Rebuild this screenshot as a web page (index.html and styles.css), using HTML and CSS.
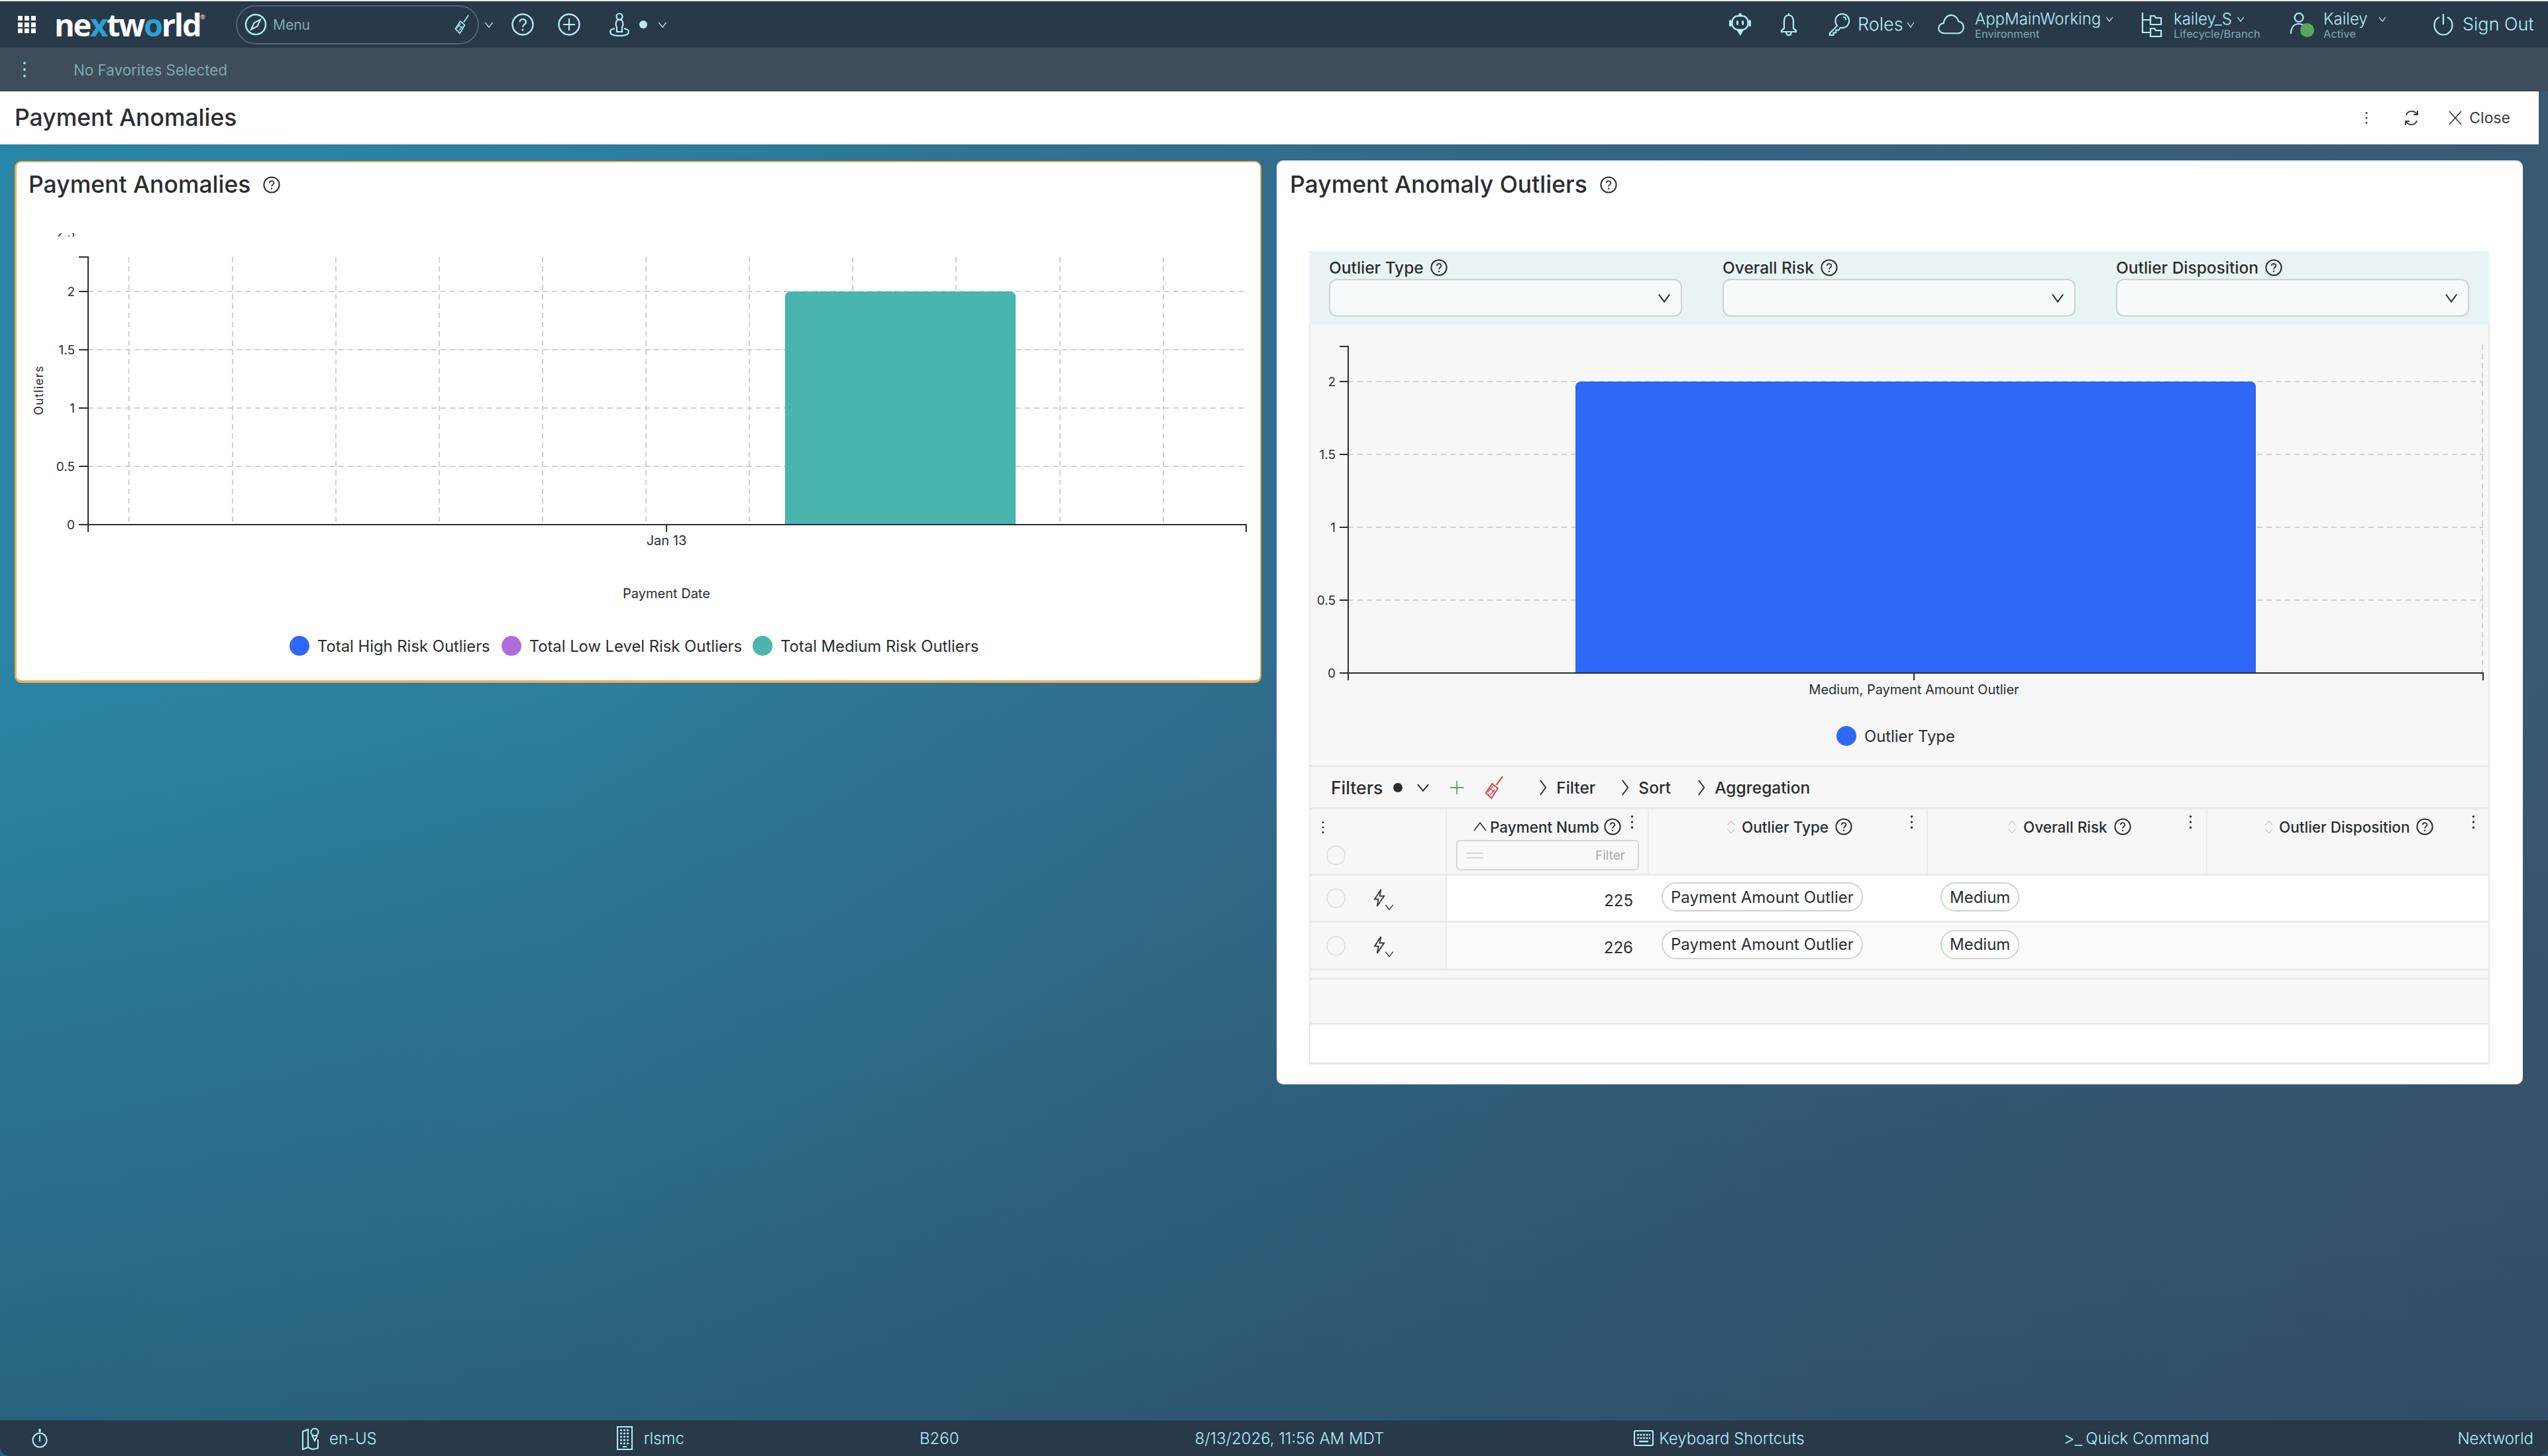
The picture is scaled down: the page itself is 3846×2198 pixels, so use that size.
FILE: index.html
```html
<!DOCTYPE html>
<html lang="en">
<head>
<meta charset="utf-8">
<title>Payment Anomalies</title>
<link rel="stylesheet" href="styles.css">
</head>
<body>
<svg class="defs" width="0" height="0">
  <defs>
    <symbol id="help" viewBox="0 0 26 26"><circle cx="13" cy="13" r="11.6" fill="none" stroke="currentColor" stroke-width="2"/><path d="M9.8 10.3c0-4.2 6.6-4.2 6.6-.2 0 2.6-3.3 2.6-3.3 5.4" fill="none" stroke="currentColor" stroke-width="1.8"/><circle cx="13" cy="18.8" r="1.2" fill="currentColor"/></symbol>
    <symbol id="kebab" viewBox="0 0 8 32"><circle cx="4" cy="4" r="2.4" fill="currentColor"/><circle cx="4" cy="16" r="2.4" fill="currentColor"/><circle cx="4" cy="28" r="2.4" fill="currentColor"/></symbol>
    <symbol id="chev" viewBox="0 0 16 10" preserveAspectRatio="none"><path d="M1.5 1 8 9l6.500-8" fill="none" stroke="currentColor" stroke-width="1.600"/></symbol>
    <symbol id="chevr" viewBox="0 0 10 22" preserveAspectRatio="none"><path d="M1.500 1.500 8.500 11l-7 9.500" fill="none" stroke="currentColor" stroke-width="1.600"/></symbol>
    <symbol id="sort" viewBox="0 0 14 22" preserveAspectRatio="none"><path d="M1.500 8 7 1.500 12.500 8M1.500 14 7 20.500 12.500 14" fill="none" stroke="#c9c9c9" stroke-width="1.300"/></symbol>
    <symbol id="broom" viewBox="0 0 30 36" preserveAspectRatio="none"><path d="M29 1 19 14M12 12l9 7-10 15-9-8z" fill="none" stroke="currentColor" stroke-width="2.200"/><path d="M7 18l9 7M5 25l8-9M9 29l7-8" fill="none" stroke="currentColor" stroke-width="1.500"/></symbol>
    <symbol id="bolt" viewBox="0 0 20 28" preserveAspectRatio="none"><path d="M12 1 2 16h6l-2 11 11-16h-7l2-10z" fill="none" stroke="currentColor" stroke-width="1.800"/></symbol>
  </defs>
</svg>

<div class="strip"></div>

<header class="topbar">
  <svg class="i-grid" viewBox="0 0 27 26"><g fill="#fff"><rect width="7" height="7"/><rect x="10" width="7" height="7"/><rect x="20" width="7" height="7"/><rect y="10" width="7" height="7"/><rect x="10" y="10" width="7" height="7"/><rect x="20" y="10" width="7" height="7"/><rect y="19" width="7" height="7"/><rect x="10" y="19" width="7" height="7"/><rect x="20" y="19" width="7" height="7"/></g></svg>
  <div class="logo">ne<span class="logo-x">x</span>tw<span class="logo-o">o</span>rld<sup class="logo-r">®</sup></div>
  <div class="menu">
    <svg class="i-compass" viewBox="0 0 34 34"><circle cx="17" cy="17" r="15" fill="none" stroke="currentColor" stroke-width="2.400"/><path d="M24 9.500 19.500 19.500 10 24.500 14.500 14.500z" fill="none" stroke="currentColor" stroke-width="2"/></svg>
    <span class="menu-text">Menu</span>
    <svg class="i-menu-broom"><use href="#broom"/></svg>
  </div>
  <svg class="i-chev c1"><use href="#chev"/></svg>
  <svg class="i-round c2" viewBox="0 0 34 34"><circle cx="17" cy="17" r="15.500" fill="none" stroke="currentColor" stroke-width="2.400"/><path d="M12.500 13.500c0-6 9.500-6 9.500-.2 0 3.700-5 3.700-5 7.700" fill="none" stroke="currentColor" stroke-width="2.200"/><circle cx="17" cy="25" r="1.600" fill="currentColor"/></svg>
  <svg class="i-round c3" viewBox="0 0 34 34"><circle cx="17" cy="17" r="15.500" fill="none" stroke="currentColor" stroke-width="2.400"/><path d="M17 8v18M8 17h18" stroke="currentColor" stroke-width="2.200"/></svg>
  <svg class="i-round c4" viewBox="0 0 34 36"><path d="M10 24C5 25 3 27 3 29c0 4 6 6 14 6s14-2 14-6c0-2-2-4-7-5" fill="none" stroke="currentColor" stroke-width="2.200"/><circle cx="17" cy="6" r="4.500" fill="none" stroke="currentColor" stroke-width="2.200"/><path d="M14 11c-3 3-3 8-1 11v7h8v-7c2-3 2-8-1-11z" fill="none" stroke="currentColor" stroke-width="2.200"/></svg>
  <span class="tb-dot"></span>
  <svg class="i-chev c5"><use href="#chev"/></svg>

  <svg class="i-robot" viewBox="0 0 33 34"><path d="M16.500 0v4" stroke="currentColor" stroke-width="4"/><rect x="4.500" y="4" width="24" height="21" rx="9" fill="none" stroke="currentColor" stroke-width="2.400"/><rect x="0" y="10" width="3.500" height="10" rx="1.500" fill="currentColor"/><rect x="29.500" y="10" width="3.500" height="10" rx="1.500" fill="currentColor"/><rect x="11" y="11" width="2.800" height="7" rx="1.400" fill="currentColor"/><rect x="19.200" y="11" width="2.800" height="7" rx="1.400" fill="currentColor"/><path d="M11 25h11l-5 9z" fill="currentColor"/></svg>
  <svg class="i-bell" viewBox="0 0 26 34"><path d="M13 0v3M13 3C8 3 6 7 6 13v10l-4 3v2h22v-2l-4-3V13C20 7 18 3 13 3zM9.500 28v2c0 4 7 4 7 0v-2" fill="none" stroke="currentColor" stroke-width="2.200"/></svg>
  <svg class="i-key" viewBox="0 0 34 36"><path d="M14 20 2 32v3h6v-4h4v-4h4l3-4c8 2 14-4 14-11C33 6 28 1 22 1S11 6 11 12c0 3 1 6 3 8z" fill="none" stroke="currentColor" stroke-width="2.200"/><path d="M23 6c3 0 5 2 5 5" fill="none" stroke="currentColor" stroke-width="2"/></svg>
  <span class="tb-text t-roles">Roles</span>
  <svg class="i-chev c6"><use href="#chev"/></svg>
  <svg class="i-cloud" viewBox="0 0 42 34"><path d="M10 31C4 31 1 27 1 23c0-4 3-8 8-8 1-8 6-13 12-13 6 0 10 4 12 10 5 1 8 5 8 10s-4 9-9 9z" fill="none" stroke="currentColor" stroke-width="2.200"/></svg>
  <div class="stack s-env">
    <div class="stack-top"><span class="tb-text">AppMainWorking</span><svg class="i-chev small"><use href="#chev"/></svg></div>
    <span class="tb-sub">Environment</span>
  </div>
  <svg class="i-branch" viewBox="0 0 32 38"><path d="M2 1v30h12M2 12h12M14 6h6l2 3h8v10H14zM14 25h6l2 3h8v9H14z" fill="none" stroke="currentColor" stroke-width="2.200"/></svg>
  <div class="stack s-branch">
    <div class="stack-top"><span class="tb-text">kailey_S</span><svg class="i-chev small"><use href="#chev"/></svg></div>
    <span class="tb-sub">Lifecycle/Branch</span>
  </div>
  <div class="person">
    <svg class="i-person" viewBox="0 0 36 37"><circle cx="13" cy="7.500" r="6.500" fill="none" stroke="currentColor" stroke-width="2.200"/><path d="M1 32c0-9 4-15 12-15 3 0 5 1 7 2" fill="none" stroke="currentColor" stroke-width="2.200"/></svg>
    <span class="status"></span>
  </div>
  <div class="stack s-user">
    <div class="stack-top"><span class="tb-text">Kailey</span><svg class="i-chev small gap"><use href="#chev"/></svg></div>
    <span class="tb-sub">Active</span>
  </div>
  <svg class="i-power" viewBox="0 0 30 34"><path d="M9 6C4 8 1.500 13 1.500 18c0 8 6 14.500 13.500 14.500S28.500 26 28.500 18C28.500 13 26 8 21 6M15 1v16" fill="none" stroke="currentColor" stroke-width="2.200"/></svg>
  <span class="tb-text t-sign">Sign Out</span>
</header>

<div class="favbar">
  <svg class="i-favk"><use href="#kebab"/></svg>
  <span class="fav-text">No Favorites Selected</span>
</div>

<div class="pagehead">
  <h1 class="pagetitle">Payment Anomalies</h1>
  <svg class="i-pagek"><use href="#kebab"/></svg>
  <svg class="i-refresh" viewBox="0 0 24 26"><path d="M4 9C5 5 8 3 12 3c3 0 6 1 8 4M20 17c-1 4-4 6-8 6-3 0-6-1-8-4" fill="none" stroke="currentColor" stroke-width="2"/><path d="M21 2v6h-6M3 24v-6h6" fill="none" stroke="currentColor" stroke-width="2"/></svg>
  <svg class="i-x" viewBox="0 0 22 22"><path d="M2 1l18 20M20 1 2 21" stroke="currentColor" stroke-width="1.800"/></svg>
  <span class="close-text">Close</span>
</div>

<main class="main">
  <section class="card card-left">
    <div class="cardhead"><h2 class="cardtitle">Payment Anomalies</h2><svg class="i-help-lg"><use href="#help"/></svg></div>
    <svg class="chart-left" viewBox="25 340 1876 580" width="1876" height="580">
      <defs><clipPath id="clip25"><rect x="80" y="352" width="40" height="5"/></clipPath></defs>
      <g class="grid">
        <path d="M194.500 388V792M351 388V792M507 388V792M663 388V792M819 388V792M975 388V792M1131 388V792M1287 388V792M1443 388V792M1600 388V792M1756 388V792"/>
        <path d="M133 440H1881M133 528H1881M133 616H1881M133 704H1881"/>
      </g>
      <path class="bar-teal" d="M1185 792V448a8 8 0 0 1 8-8H1525a8 8 0 0 1 8 8V792z"/>
      <path class="axis" d="M119 388H133V803M119 440H133M119 528H133M119 616H133M119 704H133M119 792H1881V803M1006 792V803"/>
      <g class="ticks">
        <text x="113" y="359" clip-path="url(#clip25)">2.5</text>
        <text x="113" y="447">2</text><text x="113" y="535">1.5</text><text x="113" y="623">1</text><text x="113" y="711">0.5</text><text x="113" y="799">0</text>
      </g>
      <text class="ax-label" x="1006" y="823">Jan 13</text>
      <text class="ax-label" x="1006" y="903">Payment Date</text>
      <text class="ax-label wide" transform="translate(65 589) rotate(-90)">Outliers</text>
    </svg>
    <div class="legend legend-left">
      <span class="lg-dot blue"></span><span class="lg-text">Total High Risk Outliers</span>
      <span class="lg-dot purple"></span><span class="lg-text">Total Low Level Risk Outliers</span>
      <span class="lg-dot teal"></span><span class="lg-text">Total Medium Risk Outliers</span>
    </div>
  </section>

  <section class="card card-right">
    <div class="cardhead"><h2 class="cardtitle">Payment Anomaly Outliers</h2><svg class="i-help-lg"><use href="#help"/></svg></div>
    <div class="inner">
      <div class="band">
        <div class="field"><div class="field-label">Outlier Type<svg class="i-help"><use href="#help"/></svg></div><div class="select"><svg class="i-sel"><use href="#chev"/></svg></div></div>
        <div class="field"><div class="field-label">Overall Risk<svg class="i-help"><use href="#help"/></svg></div><div class="select"><svg class="i-sel"><use href="#chev"/></svg></div></div>
        <div class="field"><div class="field-label">Outlier Disposition<svg class="i-help"><use href="#help"/></svg></div><div class="select"><svg class="i-sel"><use href="#chev"/></svg></div></div>
      </div>
      <div class="chartbox">
        <svg class="chart-right" viewBox="1978 490 1778 580" width="1778" height="580">
          <g class="grid">
            <path d="M2035 576H3748M2035 686H3748M2035 796H3748M2035 906H3748M3747 520V1016"/>
          </g>
          <path class="bar-blue" d="M2378 1016V584a8 8 0 0 1 8-8H3397a8 8 0 0 1 8 8V1016z"/>
          <path class="axis" d="M2022 523H2035V1027M2022 576H2035M2022 686H2035M2022 796H2035M2022 906H2035M2022 1016H3748V1027M2889 1016V1027"/>
          <g class="ticks">
            <text x="2016" y="583">2</text><text x="2016" y="693">1.5</text><text x="2016" y="803">1</text><text x="2016" y="913">0.5</text><text x="2016" y="1023">0</text>
          </g>
          <text class="ax-label" x="2889" y="1048">Medium, Payment Amount Outlier</text>
        </svg>
        <div class="legend legend-right"><span class="lg-dot blue"></span><span class="lg-text">Outlier Type</span></div>
      </div>
      <div class="filterbar">
        <span class="fb-title">Filters</span>
        <span class="fb-dot"></span>
        <svg class="i-fb-chev"><use href="#chev"/></svg>
        <svg class="i-plus" viewBox="0 0 24 24"><path d="M12 1v22M1 12h22" stroke="#55a85b" stroke-width="2"/></svg>
        <svg class="i-fb-broom"><use href="#broom"/></svg>
        <svg class="i-fb-r r1"><use href="#chevr"/></svg><span class="fb-link">Filter</span>
        <svg class="i-fb-r r2"><use href="#chevr"/></svg><span class="fb-link">Sort</span>
        <svg class="i-fb-r r3"><use href="#chevr"/></svg><span class="fb-link">Aggregation</span>
      </div>
      <div class="table">
        <div class="th th-sel">
          <svg class="i-thk0"><use href="#kebab"/></svg>
          <span class="radio"></span>
        </div>
        <div class="th th-pay">
          <div class="th-row">
            <svg class="i-up" viewBox="0 0 20 14"><path d="M1 13 10 1l9 12" fill="none" stroke="currentColor" stroke-width="1.600"/></svg>
            <span class="th-text">Payment Numb</span>
            <svg class="i-help"><use href="#help"/></svg>
            <svg class="i-thk"><use href="#kebab"/></svg>
          </div>
          <div class="th-filter"><span class="eq"></span><span class="th-filter-text">Filter</span></div>
        </div>
        <div class="th th-type"><div class="th-row"><svg class="i-sort"><use href="#sort"/></svg><span class="th-text">Outlier Type</span><svg class="i-help"><use href="#help"/></svg><svg class="i-thk"><use href="#kebab"/></svg></div></div>
        <div class="th th-risk"><div class="th-row"><svg class="i-sort"><use href="#sort"/></svg><span class="th-text">Overall Risk</span><svg class="i-help"><use href="#help"/></svg><svg class="i-thk"><use href="#kebab"/></svg></div></div>
        <div class="th th-disp"><div class="th-row"><svg class="i-sort"><use href="#sort"/></svg><span class="th-text">Outlier Disposition</span><svg class="i-help"><use href="#help"/></svg><svg class="i-thk"><use href="#kebab"/></svg></div></div>

        <div class="td td-sel"><span class="radio"></span><svg class="i-bolt"><use href="#bolt"/></svg><svg class="i-bolt-chev"><use href="#chev"/></svg></div>
        <div class="td td-num">225</div>
        <div class="td td-pill"><span class="pill">Payment Amount Outlier</span></div>
        <div class="td td-pill"><span class="pill">Medium</span></div>
        <div class="td"></div>

        <div class="td td-sel alt"><span class="radio"></span><svg class="i-bolt"><use href="#bolt"/></svg><svg class="i-bolt-chev"><use href="#chev"/></svg></div>
        <div class="td td-num alt">226</div>
        <div class="td td-pill alt"><span class="pill">Payment Amount Outlier</span></div>
        <div class="td td-pill alt"><span class="pill">Medium</span></div>
        <div class="td alt"></div>
      </div>
      <div class="tspacer"></div>
      <div class="tgray"></div>
      <div class="twhite"></div>
    </div>
  </section>
</main>

<footer class="footer">
  <svg class="i-stop" viewBox="0 0 24 36"><path d="M12 4v5" stroke="currentColor" stroke-width="3"/><circle cx="12" cy="21" r="10.500" fill="none" stroke="currentColor" stroke-width="2"/><path d="M12 14v9" stroke="currentColor" stroke-width="2"/></svg>
  <svg class="i-map" viewBox="0 0 26 36"><path d="M1 8l8-3v27l-8 3zM9 5v27l7 3" fill="none" stroke="currentColor" stroke-width="2"/><circle cx="19" cy="9" r="5.500" fill="none" stroke="currentColor" stroke-width="2"/><path d="M15 14l4 8 4-8M24 20v13l-8 2" fill="none" stroke="currentColor" stroke-width="2"/></svg>
  <span class="ft ft-lang">en-US</span>
  <svg class="i-building" viewBox="0 0 24 36"><path d="M1 1h22v34H1z" fill="none" stroke="currentColor" stroke-width="2"/><path d="M5 6h14M5 11h14M5 16h14M5 21h14M5 26h14" stroke="currentColor" stroke-width="2.400" stroke-dasharray="3 2"/><path d="M9 31h6" stroke="currentColor" stroke-width="2"/></svg>
  <span class="ft ft-org">rlsmc</span>
  <span class="ft ft-build">B260</span>
  <span class="ft ft-date">8/13/2026, 11:56 AM MDT</span>
  <svg class="i-keyb" viewBox="0 0 30 24"><rect x="1" y="1" width="28" height="22" rx="2" fill="none" stroke="currentColor" stroke-width="2"/><path d="M5 7h20M5 12h20" stroke="currentColor" stroke-width="2.400" stroke-dasharray="3 1.500"/><path d="M8 17h14" stroke="currentColor" stroke-width="2.400"/></svg>
  <span class="ft ft-keys">Keyboard Shortcuts</span>
  <span class="ft ft-cmdsym">&gt;_</span>
  <span class="ft ft-cmd">Quick Command</span>
  <span class="ft ft-brand">Nextworld</span>
</footer>
</body>
</html>
```
FILE: styles.css
```css
* { box-sizing: border-box; }
html, body { margin: 0; padding: 0; }
body {
  width: 3846px;
  height: 2198px;
  overflow: hidden;
  display: flex;
  flex-direction: column;
  font-family: "Inter", "Liberation Sans", sans-serif;
  color: #2a2d30;
  background:
    linear-gradient(to bottom, rgba(40, 62, 85, 0) 45%, rgba(40, 62, 85, 0.5) 100%),
    linear-gradient(to right, #2a86a6 0%, #2c7f9f 22%, #30708f 45%, #356280 70%, #3a5a72 100%);
}
svg { display: block; flex: none; }
.defs { position: absolute; }
.strip { height: 2px; background: #ececec; flex: none; }

/* top bar */
.topbar {
  flex: none;
  height: 70px;
  background: #28394a;
  display: flex;
  align-items: center;
  padding-left: 27px;
  color: #b4eefb;
}
.i-grid { width: 27px; height: 26px; }
.logo {
  margin-left: 28px;
  width: 230px;
  font-family: "Open Sans", sans-serif;
  font-weight: 700;
  font-size: 47px;
  letter-spacing: -2.300px;
  line-height: 50px;
  color: #fff;
  white-space: nowrap;
}
.logo-x { color: #29a3d3; }
.logo-o { color: #2da3d0; }
.logo-r { font-size: 9px; font-weight: 400; vertical-align: 26px; line-height: 0; letter-spacing: 0; }
.menu {
  margin-left: 44px;
  width: 367px;
  height: 59px;
  border: 2px solid #4c6675;
  border-radius: 30px;
  display: flex;
  align-items: center;
  padding-left: 11px;
}
.i-compass { width: 34px; height: 34px; }
.menu-text { margin-left: 9px; font-size: 21px; color: #7fa9b5; }
.i-menu-broom { width: 22px; height: 30px; margin-left: auto; margin-right: 13px; color: #b4eefb; }
.i-chev { width: 14px; height: 9px; color: #b4eefb; }
.c1 { margin-left: 8px; }
.i-round { width: 34px; height: 34px; }
.c2 { margin-left: 27px; }
.c3 { margin-left: 36px; }
.c4 { margin-left: 42px; height: 36px; }
.tb-dot { width: 12px; height: 12px; border-radius: 50%; background: #b4eefb; margin-left: 13px; }
.c5 { margin-left: 16px; }
.i-robot { width: 33px; height: 34px; margin-left: 1603px; }
.i-bell { width: 26px; height: 34px; margin-left: 44px; }
.i-key { width: 34px; height: 34px; margin-left: 46px; }
.tb-text { font-size: 27px; line-height: 28px; white-space: nowrap; font-weight: 300; }
.t-roles { margin-left: 11px; width: 67px; }
.c6 { margin-left: 7px; width: 12px; }
.i-cloud { width: 42px; height: 32px; margin-left: 34px; }
.stack { display: flex; flex-direction: column; }
.stack-top { display: flex; align-items: center; height: 28px; }
.stack .tb-text { font-size: 24px; }
.tb-sub { font-size: 16.500px; line-height: 16px; color: #7fa9b5; white-space: nowrap; }
.i-chev.small { width: 12px; height: 8px; margin-left: 7px; }
.i-chev.small.gap { margin-left: 16px; }
.s-env { margin-left: 15px; width: 211px; }
.i-branch { width: 32px; height: 38px; margin-left: 40px; }
.s-branch { margin-left: 17px; width: 136px; }
.person { position: relative; margin-left: 40px; width: 36px; height: 37px; }
.i-person { width: 36px; height: 37px; }
.status { position: absolute; left: 15px; top: 16px; width: 21px; height: 21px; border-radius: 50%; background: #58a75c; }
.s-user { margin-left: 14px; width: 100px; }
.i-power { width: 30px; height: 34px; margin-left: 66px; }
.t-sign { margin-left: 14px; }

/* favorites */
.favbar {
  flex: none;
  height: 66px;
  background: #3e4c5b;
  display: flex;
  align-items: center;
  padding-left: 33px;
  color: #9fdcec;
}
.i-favk { width: 8px; height: 26px; }
.fav-text { margin-left: 70px; font-size: 22.400px; color: #7fa9b5; }

/* page header */
.pagehead {
  flex: none;
  height: 80px;
  width: 3832px;
  background: #fff;
  display: flex;
  align-items: center;
  padding-left: 22px;
}
.pagetitle { margin: 0; font-size: 35.500px; font-weight: 500; line-height: 44px; }
.i-pagek { width: 6px; height: 20px; margin-left: auto; color: #3b3d40; }
.i-refresh { width: 24px; height: 26px; margin-left: 53px; color: #3b3d40; }
.i-x { width: 22px; height: 22px; margin-left: 43px; color: #3b3d40; }
.close-text { margin-left: 10px; margin-right: 43px; font-size: 23px; color: #3b3d40; }

/* main */
.main {
  flex: 1;
  min-height: 0;
  display: flex;
  align-items: flex-start;
  padding: 24px 0 0 22px;
}
.card { background: #fff; border-radius: 10px; flex: none; }
.card-left {
  width: 1882px;
  height: 788px;
  margin-top: 1px;
  border: 2px solid #e9ad5d;
  border-width: 2px 2px 4px 3px;
  box-shadow: 0 0 2px rgba(80, 80, 40, 0.5);
}
.card-right {
  width: 1881px;
  height: 1395px;
  margin-left: 23px;
  border-top: 2px solid #dfe3e6;
  padding: 0 50px 0 49px;
}
.cardhead { display: flex; align-items: center; height: 66px; }
.card-left .cardhead { padding-left: 18px; padding-top: 2px; }
.card-right .cardhead { margin-left: -29px; height: 70px; }
.cardtitle { margin: 0; font-size: 35.500px; font-weight: 500; line-height: 44px; }
.i-help-lg { width: 26px; height: 26px; margin-left: 19px; color: #2a2d30; }
.card-right .i-help-lg { margin-left: 19px; }
.chart-left { margin-top: 29px; }
.ticks text { font-family: "Inter", sans-serif; font-size: 19px; text-anchor: end; fill: #2a2d30; }
.ax-label { font-family: "Inter", sans-serif; font-size: 20px; text-anchor: middle; fill: #2a2d30; }
.ax-label.wide { font-size: 18px; letter-spacing: 1.200px; }
.grid path { fill: none; stroke: #d0d0d0; stroke-width: 2; stroke-dasharray: 8 6; }
.axis { fill: none; stroke: #2a2d30; stroke-width: 2; }
.bar-teal { fill: #4ab4af; }
.bar-blue { fill: #2f67f6; }
.legend { display: flex; align-items: center; height: 30px; }
.legend-left { margin: 40px 0 0 412px; }
.legend-right { margin: 26px 0 0 794px; }
.lg-dot { width: 30px; height: 30px; border-radius: 50%; flex: none; }
.lg-dot.blue { background: #2f67f6; }
.lg-dot.purple { background: #ae6ddb; margin-left: 17px; }
.lg-dot.teal { background: #4ab4af; margin-left: 16px; }
.lg-text { margin-left: 12px; font-size: 23.800px; white-space: nowrap; }

/* right panel */
.inner { border: solid #e8e8e8; border-width: 0 2px 3px 2px; margin-top: 65px; }
.band {
  height: 111px;
  margin: 0 -2px;
  background: #e8f3f5;
  display: grid;
  grid-template-columns: 533px 533px 533px;
  column-gap: 61px;
  padding: 12px 0 0 30px;
}
.field-label { display: flex; align-items: center; gap: 10px; height: 26px; font-size: 24.500px; font-weight: 500; white-space: nowrap; }
.i-help { width: 26px; height: 26px; color: #2a2d30; }
.select {
  margin-top: 4px;
  height: 57px;
  background: #f5fbfc;
  border: 2px solid #cfd1d3;
  border-radius: 12px;
  display: flex;
  align-items: center;
  justify-content: flex-end;
  padding-right: 15px;
}
.i-sel { width: 20px; height: 14px; color: #2a2d30; }
.chartbox { height: 668px; background: #f7f7f7; border-bottom: 3px solid #e9e9e9; overflow: hidden; }

.filterbar {
  height: 64px;
  background: #f7f7f7;
  border-bottom: 3px solid #e9e9e9;
  display: flex;
  align-items: center;
  padding-left: 31px;
}
.fb-title { font-size: 26.500px; font-weight: 500; }
.fb-dot { width: 14px; height: 14px; border-radius: 50%; background: #2a2d30; margin-left: 16px; }
.i-fb-chev { width: 20px; height: 12px; margin-left: 21px; color: #2a2d30; }
.i-plus { width: 22px; height: 24px; margin-left: 30px; }
.i-fb-broom { width: 28px; height: 36px; margin-left: 31px; color: #d9474e; }
.i-fb-r { width: 12px; height: 26px; color: #2a2d30; }
.r1 { margin-left: 54px; }
.r2 { margin-left: 39px; }
.r3 { margin-left: 40px; }
.fb-link { margin-left: 14px; font-size: 24.500px; font-weight: 500; }

.table {
  display: grid;
  grid-template-columns: 206px 305px 421px 422px 1fr;
  grid-template-rows: 100px 71px 72px;
}
.th { background: #f7f7f7; border-bottom: 3px solid #e9e9e9; border-right: 2px solid #ececec; position: relative; }
.th-disp { border-right: 0; }
.th-sel { display: block; }
.i-thk0 { width: 6px; height: 20px; position: absolute; left: 16px; top: 17px; color: #2a2d30; }
.radio { width: 29px; height: 30px; border-radius: 50%; border: 2px solid #e2e2e2; display: block; flex: none; }
.th-sel .radio { position: absolute; left: 24px; top: 54px; }
.th-row { display: flex; align-items: center; height: 34px; margin-top: 9px; }
.th-text { font-size: 22.500px; font-weight: 500; white-space: nowrap; }
.th .i-help { margin-left: 10px; width: 26px; height: 26px; }
.i-up { width: 20px; height: 14px; margin-left: 40px; color: #2a2d30; }
.i-sort { width: 14px; height: 21px; }
.i-thk { width: 7px; height: 22px; margin-left: auto; color: #2a2d30; margin-top: -14px; }
.th-pay .th-text { margin-left: 5px; width: 162px; }
.th-pay .i-help { margin-left: 10px; }
.th-pay .i-thk { margin-right: 20px; }
.th-type .i-sort { margin-left: 117px; }
.th-type .th-text { margin-left: 9px; }
.th-type .i-thk { margin-right: 19px; }
.th-risk .i-sort { margin-left: 120px; }
.th-risk .th-text { margin-left: 10px; }
.th-risk .i-thk { margin-right: 20px; }
.th-disp .i-sort { margin-left: 86px; }
.th-disp .th-text { margin-left: 8px; }
.th-disp .i-thk { margin-right: 19px; }
.th-filter {
  margin: 3px 0 0 14px;
  width: 276px;
  height: 46px;
  border: 2px solid #d5d5d5;
  border-radius: 6px;
  background: #f9f9f9;
  display: flex;
  align-items: center;
  padding: 0 19px 0 14px;
}
.eq { width: 25px; height: 9px; border-top: 2px solid #d5d5d5; border-bottom: 2px solid #d5d5d5; }
.th-filter-text { margin-left: auto; font-size: 19px; color: #a9a9a9; }

.td { border-bottom: 3px solid #e9e9e9; background: #fff; display: flex; align-items: center; }
.td.alt { background: #fafafa; }
.td-sel { background: #f7f7f7; border-right: 2px solid #ececec; padding-left: 24px; position: relative; }
.td-sel.alt { background: #f7f7f7; }
.i-bolt { width: 19px; height: 27px; margin: -2px 0 0 42px; color: #2a2d30; }
.i-bolt-chev { width: 14px; height: 9px; margin: 26px 0 0 -2px; color: #2a2d30; }
.td-num { justify-content: flex-end; padding-right: 24px; font-size: 24px; padding-top: 6px; }
.td-pill { padding-left: 19px; padding-bottom: 4px; }
.pill {
  height: 44px;
  padding: 0 12px;
  border: 2px solid #d2d2d2;
  border-radius: 22px;
  background: #fff;
  display: flex;
  align-items: center;
  font-size: 24px;
  white-space: nowrap;
}
.tspacer { height: 14px; background: #f7f7f7; border-bottom: 3px solid #e9e9e9; }
.tgray { height: 68px; background: #f7f7f7; border-bottom: 3px solid #e9e9e9; }
.twhite { height: 57px; background: #fff; }

/* footer */
.footer {
  flex: none;
  height: 54px;
  background: #28394a;
  display: flex;
  align-items: center;
  color: #b4eefb;
  border-radius: 0 0 14px 14px;
  padding-left: 48px;
}
.ft { font-size: 24px; white-space: nowrap; font-weight: 300; }
.i-stop { width: 24px; height: 36px; }
.i-map { width: 26px; height: 36px; margin-left: 384px; }
.ft-lang { margin-left: 15px; }
.i-building { width: 24px; height: 36px; margin-left: 362px; }
.ft-org { margin-left: 17px; }
.ft-build { margin-left: 355px; }
.ft-date { margin-left: 356px; }
.i-keyb { width: 30px; height: 24px; margin-left: 377px; }
.ft-keys { margin-left: 8px; }
.ft-cmdsym { margin-left: 391px; font-size: 26px; }
.ft-cmd { margin-left: 5px; }
.ft-brand { margin-left: auto; margin-right: 22px; }
```
